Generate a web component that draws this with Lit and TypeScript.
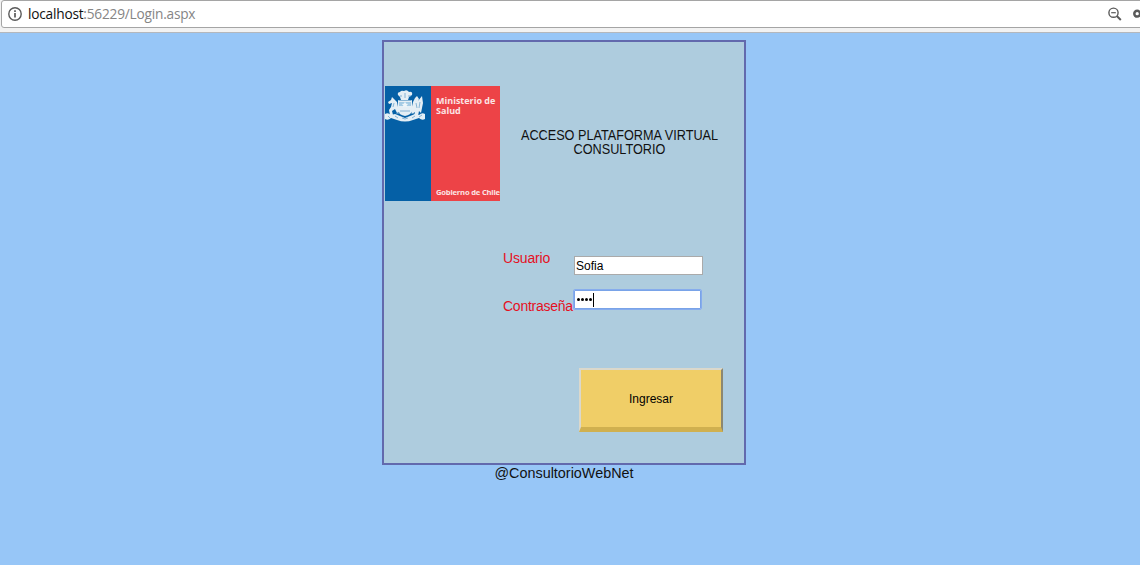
import { LitElement, html, css } from "lit";
import { customElement } from "lit/decorators.js";

@customElement("address-bar")
class AddressBar extends LitElement {
  static styles = css`
    :host { display: block; box-sizing: border-box; height: 33px; padding-top: 0; background: #f2f2f2; border-bottom: 1px solid #b4b7bc; overflow: hidden; }
    .field { box-sizing: border-box; height: 28px; margin-left: 1px; margin-right: -4px; border: 1px solid #a5a5a5; border-radius: 3px; background: #fff; display: flex; align-items: center; padding-left: 6px; }
    .info { width: 14px; height: 14px; flex: none; }
    .url { margin-left: 6px; font: 13.7px/20px "Open Sans", "Noto Sans", sans-serif; letter-spacing: -0.22px; color: #858585; flex: 1; white-space: pre; }
    .host { color: #111; }
    .tools { width: 39px; height: 26px; flex: none; }
  `;
  render() {
    return html`<div class="field">
      <svg class="info" viewBox="0 0 14 14"><circle cx="7" cy="7" r="6.2" fill="none" stroke="#5a5a5a" stroke-width="1.4"/><path d="M7 6v4.5M7 3.3v1.6" stroke="#5a5a5a" stroke-width="1.7"/></svg>
      <span class="url"><span class="host">localhost</span>:56229/Login.aspx</span>
      <svg class="tools" viewBox="0 0 39 26"><g fill="none" stroke="#5a5a5a"><circle cx="9.5" cy="11.7" r="4.6" stroke-width="1.4"/><path d="M7.2 11.7h4.6" stroke-width="1.2"/><path d="M12.8 15l4 4" stroke-width="1.9"/><circle cx="33.2" cy="12.7" r="2.9" stroke-width="2.5"/></g></svg>
    </div>`;
  }
}

@customElement("ministry-logo")
class MinistryLogo extends LitElement {
  static styles = css`
    :host { display: flex; width: 115px; height: 115px; overflow: hidden; font-family: "Open Sans", sans-serif; font-weight: 700; color: #fbe4e4; }
    .blue { width: 46px; flex: none; background: #0560a6; }
    .crest { display: block; width: 40px; height: 32px; margin-top: 4px; }
    .red { flex: 1; box-sizing: border-box; padding: 10px 0 3px 5px; background: #ed4347; display: flex; flex-direction: column; justify-content: space-between; white-space: nowrap; }
    .name { font-size: 9px; line-height: 10px; }
    .gov { font-size: 7.6px; line-height: 11px; letter-spacing: -0.19px; }
  `;
  render() {
    return html`<div class="blue"><svg class="crest" viewBox="0 0 40 32">
      <g fill="#e5eff5">
        <path d="M13 5q-1-3 2-3 1-2 4-1 3-2 5 1 4-1 3 3l-3 2-1 3h-7l-1-3z"/>
        <path d="M13 10h14v11q-1 4-7 5-6-1-7-5z"/>
        <path d="M12 12L9 9 7 7 6 10 3 12l1 2 3-1-1 4-2 3 1 5h3l-1-4 3-2 2 4 2-1-1-5z"/>
        <path d="M28 12l2-4 2-2 2 3-1 2 4-5 1 7-2 10-2-2-1 5h-4l1-4-3 2-1-3z"/>
        <path d="M0 24q3-2 6 1l4-1 10 4 10-4 4 1q3-3 6-1v5q-3 2-6-1l-6 2q-8 3-16 0l-6-2q-3 3-6 1z"/>
      </g>
      <g fill="none" stroke="#6fa4cb" stroke-width=".8"><path d="M15 6h2m3-3v5m3-2h3M13.5 10.5h13M15 21h10M3 26l2 2m5-2l3 2m4 0l3 1 3-1m4 0l3-2m4 1l3-2M31 13l1 5m3-6l-1 6M9 13l-1 4M11 24l4-1m11 0l3 1"/></g>
      <path d="M14 12h12v4H14z" fill="#a5cce5"/><path d="M20 11.8l1.2 2 2 .2-1.5 1.3.4 2-2.1-1-2.1 1 .4-2-1.5-1.3 2-.2z" fill="#eef6fa"/>
    </svg></div>
    <div class="red"><div class="name">Ministerio de<br>Salud</div><div class="gov">Gobierno de Chile</div></div>`;
  }
}

@customElement("login-panel")
class LoginPanel extends LitElement {
  static styles = css`
    :host { display: block; box-sizing: border-box; width: 364px; height: 425px; padding: 44px 1px 0; border: 2px solid #6269ad; background: #aeccde; }
    .head { display: flex; height: 115px; }
    .title { flex: 1; margin: 42px 4px 0 0; text-align: center; font-size: 14px; line-height: 14px; white-space: nowrap; transform: scaleX(0.905); font-weight: 400; color: #111; }
    .form { display: grid; grid-template-columns: 71px 129px; margin: 40px 0 0 118px; }
    .label { font-size: 14px; line-height: 16px; color: #e5101f; white-space: nowrap; }
    .user { padding-top: 9px; letter-spacing: -0.17px; }
    .pass { padding-top: 23px; letter-spacing: -0.25px; }
    .input { box-sizing: border-box; height: 19px; background: #fff; border: 1px solid #aaa; font-size: 12px; line-height: 18px; padding-left: 1px; color: #000; }
    .box { height: 34px; box-sizing: border-box; padding-top: 15px; }
    .box.p { padding-top: 14px; margin-left: -1px; }
    .focus { width: 129px; height: 21px; border: 1px solid #86aced; border-radius: 2px; box-shadow: inset 0 0 0 1px #79a3e8; display: flex; align-items: center; padding-left: 3px; }
    .dot { width: 3px; height: 3px; border-radius: 50%; background: #000; margin-right: 1.1px; }
    .caret { width: 1px; height: 14px; background: #000; }
    .button { display: block; box-sizing: border-box; width: 144px; height: 64px; margin: 54px 0 0 194px; padding: 0; background: #f0ce67; border-style: solid; border-width: 2px 2px 5px 2px; border-color: #dbd8cc #8c8770 #d0b04f #dbd8cc; font: 12px "Liberation Sans", sans-serif; color: #000; }
  `;
  render() {
    return html`<div class="head"><ministry-logo></ministry-logo><h1 class="title">ACCESO PLATAFORMA VIRTUAL<br>CONSULTORIO</h1></div>
      <div class="form">
        <span class="label user">Usuario</span><div class="box"><div class="input">Sofia</div></div>
        <span class="label pass">Contraseña</span><div class="box p"><div class="input focus">${[0, 1, 2, 3].map(() => html`<span class="dot"></span>`)}<span class="caret"></span></div></div>
      </div>
      <button class="button">Ingresar</button>`;
  }
}

@customElement("app-root")
class AppRoot extends LitElement {
  static styles = css`
    :host { display: flex; flex-direction: column; height: 565px; overflow: hidden; background: #97c6f7; font-family: "Liberation Sans", Arial, sans-serif; }
    .page { display: flex; flex-direction: column; align-items: center; width: 1128px; padding-top: 7px; }
    .footer { font-size: 14.4px; line-height: 16px; color: #111; }
  `;
  render() {
    return html`<address-bar></address-bar><main class="page"><login-panel></login-panel><div class="footer">@ConsultorioWebNet</div></main>`;
  }
}
